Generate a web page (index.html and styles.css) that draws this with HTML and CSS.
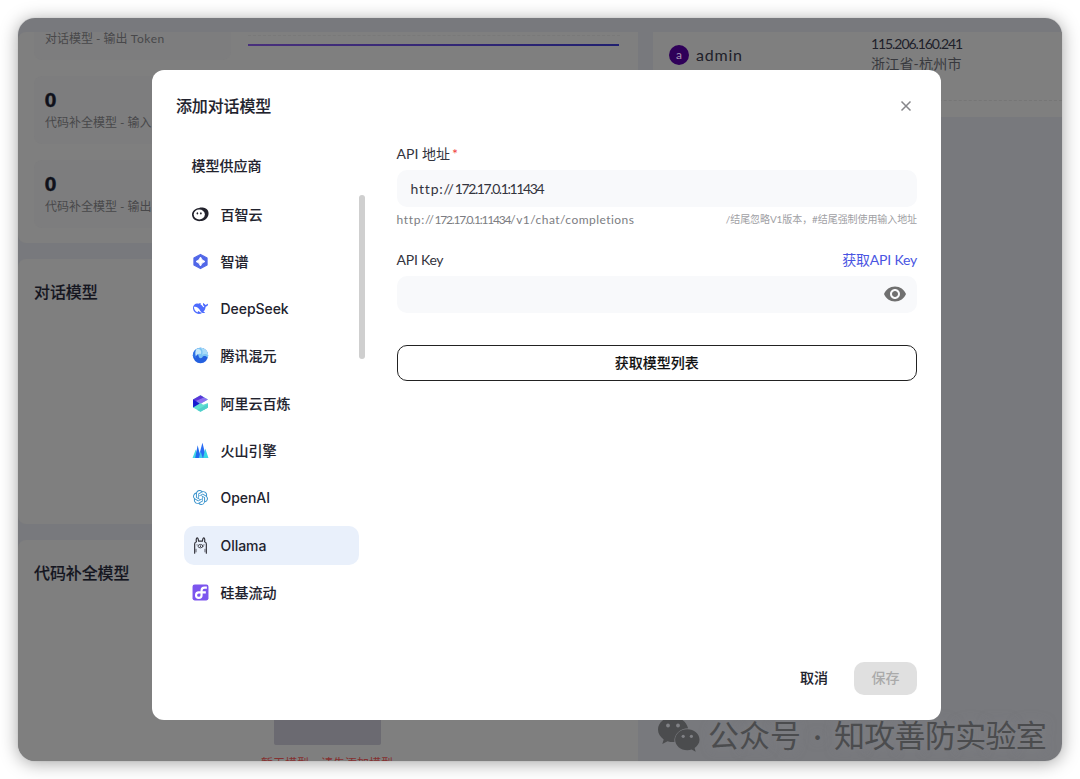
FILE: index.html
```html
<!DOCTYPE html>
<html lang="zh-CN">
<head>
<meta charset="utf-8">
<title>添加对话模型</title>
<link rel="stylesheet" href="styles.css">
</head>
<body>
<div class="window">
  <div class="dashboard">
    <div class="col-left">
      <section class="card usage">
        <div class="stats">
          <div class="stat stat-first"><span class="stat-label">对话模型 - 输出 <span class="token">Token</span></span></div>
          <div class="stat"><b class="stat-num">0</b><span class="stat-label">代码补全模型 - 输入</span></div>
          <div class="stat"><b class="stat-num">0</b><span class="stat-label">代码补全模型 - 输出</span></div>
        </div>
        <div class="chart"><div class="chart-grid"></div><div class="chart-line"></div></div>
      </section>
      <section class="card chat-models"><h2>对话模型</h2></section>
      <section class="card code-models">
        <h2>代码补全模型</h2>
        <div class="empty"><div class="empty-box"></div><span>暂无模型，请先添加模型</span></div>
      </section>
    </div>
    <div class="col-right">
      <section class="card logins">
        <div class="login-row">
          <span class="avatar">a</span><span class="user">admin</span>
          <span class="origin"><span class="ip">115.206.160.241</span><span class="region">浙江省-杭州市</span></span>
        </div>
      </section>
    </div>
  </div>
  <div class="watermark">
    <svg class="wechat" viewBox="0 0 42 35"><g fill="#4b4c4e"><path d="M15 0C6.600 0 0 5.500 0 12.600c0 4 2.200 7.500 5.700 9.800L4.300 27l5.200-2.800c2.200.7 4.500.9 6.900.8-.8-7.600 6-13.700 13.700-13.700C28.500 4.600 22.500 0 15 0z"/><path d="M41.500 22.700c0-6-5.500-10.400-12.200-10.400s-12.200 4.700-12.200 10.500 5.500 10.500 12.200 10.500c1.600 0 3-.3 4.400-.8l4 2.200-1.100-3.800c3-2 4.900-4.900 4.900-8.200z"/></g><g fill="#808185"><circle cx="10" cy="8.500" r="1.900"/><circle cx="20" cy="8.500" r="1.900"/><circle cx="25.200" cy="19.300" r="1.600"/><circle cx="33.400" cy="19.300" r="1.600"/></g></svg>
    <span class="wm-a">公众号</span><span class="wm-dot">·</span><span class="wm-b">知攻善防实验室</span>
  </div>
  <div class="modal">
    <header class="modal-head"><h1>添加对话模型</h1>
      <svg class="close" viewBox="0 0 12 12"><path d="M1.500 1.500l9 9M10.500 1.500l-9 9" fill="none" stroke="#86868a" stroke-width="1.500"/></svg>
    </header>
    <div class="modal-body">
      <aside class="providers">
        <div class="providers-title">模型供应商</div>
        <div class="providers-scroll">
        <ul class="provider-list">
          <li><svg viewBox="0 0 18 16"><path d="M7.500 1C11 .2 16.200.8 17.300 5c1.200 5-2.500 9.600-8.600 10C3.500 15.300 0 12 0 8c0-3.600 3.100-6.400 7.500-7z" fill="#22222c"/><ellipse cx="7.700" cy="8" rx="5.900" ry="5.200" fill="#fff"/><ellipse cx="5.700" cy="6.800" rx=".8" ry="1.300" fill="#22222c"/><ellipse cx="9.400" cy="6.800" rx=".8" ry="1.300" fill="#22222c"/></svg><span>百智云</span></li>
          <li><svg viewBox="0 0 16 16"><path d="M8 1.300L14.200 4.700v6.600L8 14.700 1.800 11.300V4.700z" fill="#5167e8" stroke="#5167e8" stroke-linejoin="round"/><path d="M8 3.800Q8.900 7.100 12.200 8 8.900 8.900 8 12.200 7.100 8.900 3.800 8 7.100 7.100 8 3.800z" fill="#fff" stroke="#fff" stroke-width=".9"/></svg><span>智谱</span></li>
          <li><svg class="snug" viewBox="0 0 24 24"><path fill="#4d6bfe" d="M23.748 4.482c-.254-.124-.364.113-.512.234-.051.039-.094.090-.137.136-.372.397-.806.657-1.373.626-.829-.046-1.537.214-2.163.848-.133-.782-.575-1.248-1.247-1.548-.352-.156-.708-.311-.955-.650-.172-.241-.219-.510-.305-.774-.055-.160-.110-.323-.293-.350-.2-.031-.278.136-.356.276-.313.572-.434 1.202-.422 1.840.027 1.436.633 2.580 1.838 3.393.137.093.172.187.129.323-.082.280-.180.552-.266.833-.055.179-.137.217-.329.140a5.526 5.526 0 0 1-1.736-1.180c-.857-.828-1.631-1.742-2.597-2.458a11.365 11.365 0 0 0-.689-.471c-.985-.957.130-1.743.388-1.836.270-.098.093-.432-.779-.428-.872.004-1.670.295-2.687.684a3.055 3.055 0 0 1-.465.137 9.597 9.597 0 0 0-2.883-.102c-1.885.210-3.390 1.102-4.497 2.623C.082 8.606-.231 10.684.152 12.850c.403 2.284 1.569 4.175 3.360 5.653 1.858 1.533 3.997 2.284 6.438 2.140 1.482-.085 3.133-.284 4.994-1.860.470.234.962.327 1.780.397.630.059 1.236-.030 1.705-.128.735-.156.684-.837.419-.961-2.155-1.004-1.682-.595-2.113-.926 1.096-1.296 2.746-2.642 3.392-7.003.050-.347.007-.565 0-.845-.004-.170.035-.237.230-.256a4.173 4.173 0 0 0 1.545-.475c1.396-.763 1.960-2.015 2.093-3.517.020-.230-.004-.467-.247-.588zM11.581 18c-2.089-1.642-3.102-2.183-3.520-2.160-.392.024-.321.471-.235.763.090.288.207.486.371.739.114.167.192.416-.113.603-.673.416-1.842-.140-1.897-.167-1.361-.802-2.500-1.860-3.301-3.307-.774-1.393-1.224-2.887-1.298-4.482-.020-.386.093-.522.477-.592a4.696 4.696 0 0 1 1.529-.039c2.132.312 3.946 1.265 5.468 2.774.868.860 1.525 1.887 2.202 2.891.720 1.066 1.494 2.082 2.480 2.914.348.292.625.514.891.677-.802.090-2.140.110-3.054-.614z"/></svg><span class="latin">DeepSeek</span></li>
          <li><svg viewBox="0 0 16 16"><circle cx="8" cy="8" r="7.200" fill="#2460df"/><path d="M8 .8a7.200 7.200 0 0 1 6.800 9.600C13 7.800 10.700 8.300 9.600 9.800 8.600 11 6.500 10.600 6.300 8.700 6 6 4 5 2 4.200A7.200 7.200 0 0 1 8 .8z" fill="#7cc5f4"/><path d="M8 .8C12.500.8 15.200 4.500 15.200 8 13.500 6 11 6.200 9.500 7.600 10.500 5 10 2.500 8 .8z" fill="#a9dcf8"/><path d="M4.800 1.600C8 1.500 9.500 4 8.300 6.600 6.800 5.800 4 6.500 3.200 10 2 7 2.500 3.500 4.800 1.600z" fill="#c5e8fa"/><path d="M1 9.500C.3 6 2 3 3.700 2.300 2.800 5 3 7.500 4 9.800z" fill="#2e72e5"/></svg><span>腾讯混元</span></li>
          <li><svg viewBox="0 0 16 16"><path d="M8 .3L15 4.200 8.500 8 15 11.800 8 15.700 1 11.800V4.200z" fill="#63dfd2"/><path d="M15 7.500v4.500l-4 2-3-4z" fill="#63dfd2"/><path d="M1 4.200L8 .3l3.500 2L1 8.200z" fill="#5b35d9"/><path d="M3.500 5.700L11.500 2.300 15 4.200 8.500 8z" fill="#8e72f2"/><path d="M1 4.200L7.300 8 1 11.800z" fill="#171bd1"/><path d="M5 14L15 8.500v3.300L8 15.700z" fill="#4fcfcb"/></svg><span>阿里云百炼</span></li>
          <li><svg viewBox="0 0 16 16"><path d="M.5 15L3.500 7l3 8z" fill="#42d8e5"/><path d="M3 15L5.300 3l3 12z" fill="#206bef"/><path d="M6 15L9.800.8 13.500 15z" fill="#286cf5"/><path d="M10.500 15l2-9 3 9z" fill="#37d7e5"/><path d="M6.500 15l1.600-6 2 6z" fill="#40c9ef"/></svg><span>火山引擎</span></li>
          <li><svg class="snug" viewBox="0 0 24 24"><path fill="#3b94cd" d="M22.282 9.821a5.985 5.985 0 0 0-.516-4.910 6.046 6.046 0 0 0-6.510-2.900A6.065 6.065 0 0 0 4.981 4.182a5.985 5.985 0 0 0-3.998 2.900 6.046 6.046 0 0 0 .743 7.097 5.980 5.980 0 0 0 .510 4.911 6.051 6.051 0 0 0 6.515 2.900A5.985 5.985 0 0 0 13.260 24a6.056 6.056 0 0 0 5.772-4.206 5.990 5.990 0 0 0 3.997-2.900 6.056 6.056 0 0 0-.747-7.073zM13.260 22.430a4.476 4.476 0 0 1-2.876-1.040l.141-.081 4.779-2.758a.795.795 0 0 0 .392-.681v-6.737l2.020 1.168a.071.071 0 0 1 .038.052v5.583a4.504 4.504 0 0 1-4.494 4.494zM3.600 18.304a4.470 4.470 0 0 1-.535-3.014l.142.085 4.783 2.759a.771.771 0 0 0 .780 0l5.843-3.369v2.332a.080.080 0 0 1-.033.062L9.740 19.950a4.500 4.500 0 0 1-6.140-1.646zM2.340 7.896a4.485 4.485 0 0 1 2.366-1.973V11.600a.766.766 0 0 0 .388.677l5.815 3.354-2.020 1.169a.076.076 0 0 1-.071 0l-4.830-2.787A4.504 4.504 0 0 1 2.340 7.872zm16.597 3.855l-5.833-3.387L15.119 7.200a.076.076 0 0 1 .071 0l4.830 2.791a4.494 4.494 0 0 1-.676 8.105v-5.678a.790.790 0 0 0-.407-.667zm2.010-3.023l-.141-.085-4.774-2.782a.776.776 0 0 0-.785 0L9.409 9.230V6.897a.066.066 0 0 1 .028-.061l4.830-2.787a4.499 4.499 0 0 1 6.680 4.660zm-12.640 4.135l-2.020-1.164a.080.080 0 0 1-.038-.057V6.075a4.499 4.499 0 0 1 7.375-3.453l-.142.080L8.704 5.460a.795.795 0 0 0-.393.681zm1.097-2.365l2.602-1.500 2.607 1.500v2.999l-2.597 1.500-2.607-1.500z"/></svg><span class="latin">OpenAI</span></li>
          <li class="active"><svg viewBox="0 0 16 16"><g fill="none" stroke="#33333b" stroke-width="1.100" stroke-linecap="round" stroke-linejoin="round"><path d="M2.500 15.200V6.500C2.500 5.500 3.200 4.800 4.200 4.500 3.700 2.500 4 .8 4.900.8S6 2 6.200 3.900h3.600C10 2 10.300.8 11.100.8s1.200 1.700.7 3.700c1 .3 1.700 1 1.700 2v8.700"/><path d="M3.800 11.500v2.500M12.200 11.500v2.500" stroke-width=".7"/><ellipse cx="8" cy="8.600" rx="2.300" ry="1.600" stroke-width=".8"/><path d="M8 8.300v.7M4.700 7.400h.1M11.200 7.400h.1" stroke-width=".9"/></g></svg><span class="latin">Ollama</span></li>
          <li><svg viewBox="0 0 16 16"><rect x=".5" y=".5" width="15" height="15" rx="2" fill="#7c55ee"/><path d="M14 3.400h-2.200C9.600 3.400 9 4.500 9 6.200v4.300a2.600 2.600 0 1 1-2.600-2.600h6.600" fill="none" stroke="#fff" stroke-width="2"/></svg><span>硅基流动</span></li>
        </ul>
        <div class="scrollbar"></div>
        </div>
      </aside>
      <form class="settings">
        <label class="label"><span>API 地址 <i>*</i></span></label>
        <div class="input"><span class="scheme">http://</span><span class="host">172.17.0.1:11434</span></div>
        <div class="hint"><span><span class="h-scheme">http://</span><span class="h-host">172.17.0.1:11434</span><span class="h-path">/v1/chat/completions</span></span><span class="hint-note">/结尾忽略V1版本，#结尾强制使用输入地址</span></div>
        <label class="label"><span class="key">API Key</span><a>获取API Key</a></label>
        <div class="input"><svg class="eye" viewBox="0 0 24 24"><path fill="#707070" d="M12 4.500C7 4.500 2.730 7.610 1 12c1.730 4.390 6 7.500 11 7.500s9.270-3.110 11-7.500c-1.730-4.390-6-7.500-11-7.500M12 17c-2.760 0-5-2.240-5-5s2.240-5 5-5 5 2.240 5 5-2.240 5-5 5m0-8c-1.660 0-3 1.340-3 3s1.340 3 3 3 3-1.340 3-3-1.340-3-3-3"/></svg></div>
        <button type="button" class="fetch">获取模型列表</button>
      </form>
    </div>
    <footer class="modal-foot"><span class="cancel">取消</span><button type="button" class="save">保存</button></footer>
  </div>
</div>
</body>
</html>
```
FILE: styles.css
```css
* { box-sizing: border-box; }
body { margin: 0; padding: 18px; width: 1080px; height: 779px; overflow: hidden; background: #fff; font-family: Lato, "Noto Sans CJK SC", sans-serif; color: #21222d; }
h1, h2, ul { margin: 0; padding: 0; }
.window { position: relative; width: 1044px; height: 743px; border-radius: 17px; overflow: hidden; background: #78797d; }
body::before { content: ""; position: absolute; left: 18px; top: 18px; width: 1044px; height: 743px; border-radius: 17px; box-shadow: 0 2px 18px rgba(0,0,0,.36), 0 0 1px rgba(0,0,0,.3); }
.dashboard { display: flex; gap: 15px; padding-top: 14px; }
.col-left { width: 620px; display: flex; flex-direction: column; gap: 16px; flex: none; }
.col-right { flex: 1; }
.card { background: #7f7f7f; border-radius: 8px; }
.usage { height: 211px; display: flex; padding: 0 18px 0 16px; border-top-right-radius: 0; }
.stats { width: 197px; display: flex; flex-direction: column; gap: 16px; }
.stat { height: 68px; padding: 13px 11px; border-radius: 8px; background: #7d7d7e; display: flex; flex-direction: column; }
.stat-first { height: 28px; padding: 0 11px; border-radius: 0 0 8px 8px; }
.stat-num { font: 800 19px/22px Lato; color: #10111b; -webkit-text-stroke: .3px #10111b; }
.stat-label { font-size: 12px; line-height: 17px; margin-top: 3px; color: #48484a; white-space: nowrap; }
.stat-first .stat-label { margin-top: -2px; }
.token { letter-spacing: .6px; }
.chart { flex: 1; margin-left: 17px; padding-top: 3px; }
.chart-grid { height: 9px; border-top: 1px dashed #797979; }
.chart-line { height: 2px; width: 371px; background: linear-gradient(90deg, #49307c, #202070); }
.card h2 { font-size: 16px; line-height: 24px; font-weight: 500; color: #15161f; padding: 21px 16px; letter-spacing: -.1px; -webkit-text-stroke: .12px #15161f; }
.chat-models { height: 265px; }
.code-models { height: 260px; }
.empty { display: flex; flex-direction: column; align-items: center; color: #853030; font-size: 12px; line-height: 17px; padding: 70px 2px 0 0; }
.empty-box { width: 107px; height: 69px; background: #6b6a71; border-radius: 2px; margin-bottom: 10px; }
.logins { height: 85px; border-radius: 0; }
.login-row { height: 69px; border-bottom: 1px dashed #767676; display: flex; padding: 13px 0 0 16px; }
.avatar { width: 20px; height: 20px; border-radius: 50%; background: #2f0059; color: #a496b1; font: 12px/20px Lato; text-align: center; }
.user { font-size: 16px; line-height: 20px; letter-spacing: .8px; margin-left: 7px; width: 175px; color: #20212a; }
.origin { margin-top: -11px; font-size: 14px; line-height: 20px; display: flex; flex-direction: column; white-space: nowrap; color: #20212a; }
.ip { letter-spacing: -1.080px; }
.region { color: #38393e; letter-spacing: .2px; }
.watermark { position: absolute; left: 640px; top: 697px; display: flex; align-items: center; height: 40px; color: #4b4c4e; font-size: 31px; line-height: 40px; white-space: nowrap; text-shadow: 0 0 12px rgba(140,141,148,.5); }
.wechat { width: 42px; height: 35px; margin: -2px 8px 0 0; }
.wm-dot { width: 33px; text-align: center; }
.wm-b { letter-spacing: -.7px; }
.modal { position: absolute; left: 134px; top: 52px; width: 789px; height: 649.500px; border-radius: 12px; background: #fff; padding: 24px 24px 25px; display: flex; flex-direction: column; }
.modal-head { display: flex; justify-content: space-between; align-items: center; height: 24px; }
.modal-head h1 { font-size: 16px; letter-spacing: -.15px; font-weight: 500; line-height: 24px; -webkit-text-stroke: .12px #21222d; }
.close { width: 12px; height: 12px; margin-right: 5.500px; }
.modal-body { flex: 1; display: flex; }
.providers { width: 220.500px; padding-left: 7.500px; flex: none; }
.providers-title { font-size: 14px; font-weight: 500; line-height: 20px; padding: 38px 8px 18.500px; -webkit-text-stroke: .12px #21222d; }
.providers-scroll { display: flex; }
.provider-list { list-style: none; width: 175.500px; display: flex; flex-direction: column; gap: 8.300px; font-size: 14px; font-weight: 500; }
.provider-list li { height: 39px; display: flex; align-items: center; gap: 12px; padding: 0 8px; border-radius: 10px; }
.provider-list li span { -webkit-text-stroke: .12px #21222d; margin-top: -1px; }
.provider-list li .latin { font-family: Inter; letter-spacing: -.05px; -webkit-text-stroke: 0; margin-top: 0; }
.provider-list li.active { background: #e9f0fb; }
.provider-list svg { width: 17px; height: 17px; flex: none; }
.provider-list svg.snug { width: 15px; height: 15px; margin: 0 1px; }
.scrollbar { width: 6px; height: 164px; border-radius: 3px; background: #cfcfcf; }
.settings { flex: 1; padding-top: 26px; }
.label { display: flex; justify-content: space-between; font-size: 14px; line-height: 20px; margin-bottom: 6px; color: #33343d; }
.label i { color: #f04040; font-style: normal; font-size: 14px; margin-left: -1.500px; }
.label a { color: #4a55e2; letter-spacing: -.2px; }
.key { letter-spacing: -.25px; }
.input { height: 37px; background: #f8f9fb; border-radius: 10px; display: flex; align-items: center; padding: 0 14px; font-size: 14px; color: #33343d; }
.scheme { letter-spacing: .8px; }
.host { letter-spacing: -1.400px; }
.hint { display: flex; justify-content: space-between; font-size: 12px; line-height: 17px; margin: 4px 0 22px; color: #7c7d82; }
.h-scheme { letter-spacing: .7px; }
.h-host { letter-spacing: -1.200px; }
.h-path { letter-spacing: .45px; }
.hint-note { font-size: 10px; color: #a0a0a4; letter-spacing: -.08px; }
.eye { width: 24px; height: 24px; margin: -1px -4px 0 auto; }
.fetch { display: block; width: 100%; height: 36px; margin-top: 31.500px; padding: 0 0 2px; border: 1px solid #222; border-radius: 10px; background: #fff; font: 500 14px/20px "Noto Sans CJK SC", sans-serif; color: #111; -webkit-text-stroke: .12px #111; }
.modal-foot { display: flex; justify-content: flex-end; align-items: center; gap: 26px; height: 33px; font-size: 14px; font-weight: 500; }
.cancel { margin-top: -3px; -webkit-text-stroke: .12px #21222d; }
.save { width: 63px; height: 33px; padding: 0 0 3px; border: 0; border-radius: 10px; background: #e0e0e0; color: #aaa; font: 500 14px/20px "Noto Sans CJK SC", sans-serif; }
```
